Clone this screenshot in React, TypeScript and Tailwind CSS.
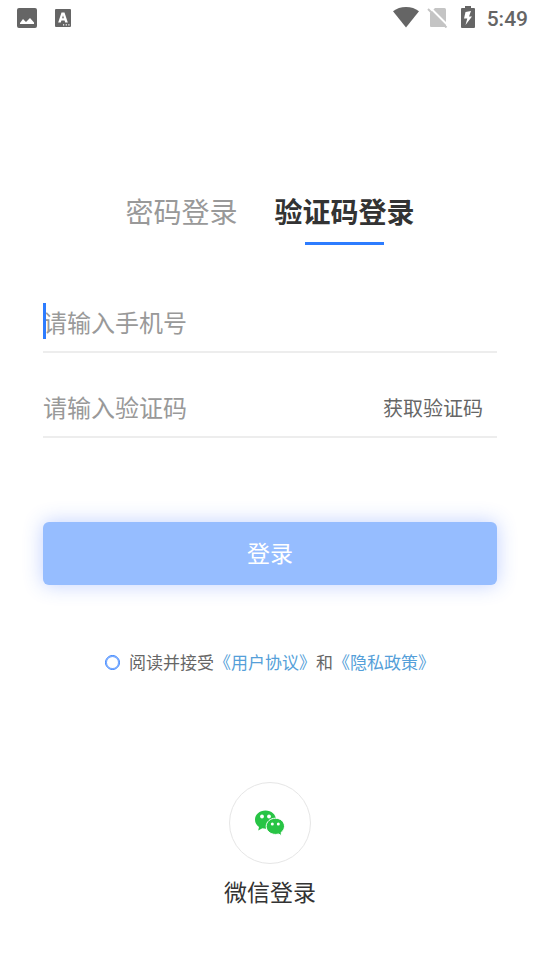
import React, { useState } from "react";

const StatusBar = () => (
  <header className="flex h-9 items-center justify-between pl-[17px] pr-3 text-[#656565]">
    <div className="flex items-center gap-[18px]">
      <svg className="h-5 w-5" viewBox="0 0 20 20" fill="currentColor">
        <path
          fillRule="evenodd"
          d="M2 0h16a2 2 0 0 1 2 2v16a2 2 0 0 1-2 2H2a2 2 0 0 1-2-2V2a2 2 0 0 1 2-2ZM3 16h14v-1.500L13 10l-4 4-3-3-3 4Z"
        />
      </svg>
      <svg className="h-[18px] w-4" viewBox="0 0 16 18" fill="currentColor">
        <path
          fillRule="evenodd"
          d="M1 0h14a1 1 0 0 1 1 1v16a1 1 0 0 1-1 1H1a1 1 0 0 1-1-1V1a1 1 0 0 1 1-1ZM6.500 3.500 3.200 13.500h2.600l.6-2h3.200l.6 2h2.600L9.500 3.500ZM8 6.300l.9 3H7.100ZM8 15.300v1.200h1.200v-1.200ZM10.700 15.300v1.200h1.200v-1.200ZM13.300 15.300v1.200h1.200v-1.200Z"
        />
      </svg>
    </div>
    <div className="flex items-center pb-0.5">
      <svg className="h-[22px] w-[26px]" viewBox="0 0 26 22" fill="currentColor">
        <path d="M13 21.500 0 5.300C3.500 2.500 8 1 13 1s9.500 1.500 13 4.300Z" />
      </svg>
      <svg className="ml-2 h-[22px] w-[22px]" viewBox="0 0 22 22">
        <path d="M8 2h9.500a1.500 1.500 0 0 1 1.500 1.500V20a1 1 0 0 1-1 1H4a1 1 0 0 1-1-1V7Z" fill="#c4c4c4" />
        <path d="m2.500 1 18.500 18.500" stroke="#fff" strokeWidth="2" />
        <path d="m1 3 18.500 18.500" stroke="#c4c4c4" strokeWidth="2" />
      </svg>
      <svg className="ml-3 h-[22px] w-[14px]" viewBox="0 0 14 22" fill="currentColor">
        <path
          fillRule="evenodd"
          d="M4 0h6v2h3a1 1 0 0 1 1 1v18a1 1 0 0 1-1 1H1a1 1 0 0 1-1-1V3a1 1 0 0 1 1-1h3ZM10 5 4.500 6 3 12.500h3.300L4.500 19l6.500-8.500H8Z"
        />
      </svg>
      <span className="ml-3 pt-1 font-['Roboto',sans-serif] text-[21px] font-medium leading-6">
        5:49
      </span>
    </div>
  </header>
);

const WechatIcon = () => (
  <svg className="h-[26px] w-[30px]" viewBox="0 0 30 26">
    <path
      d="M10.500.5C4.500.5 0 4.500 0 9.700c0 3 1.500 5.500 4 7.200L3.200 20.500l4.200-2.200c1 .3 2.200.4 3.300.4 6 0 10.300-4 10.300-9S16.500.5 10.500.5Z"
      fill="#28c445"
    />
    <circle cx="7" cy="6.500" r="1.900" fill="#fff" />
    <circle cx="14" cy="6.500" r="1.900" fill="#fff" />
    <path
      d="M20.500 8.200c-5.200 0-9.300 3.600-9.300 8.100s4.100 8.100 9.300 8.100c1 0 2-.1 2.900-.4l3.400 1.700-.7-3.200c2-1.500 3.400-3.700 3.400-6.200 0-4.500-3.900-8.100-9-8.100Z"
      fill="#28c445"
      stroke="#fff"
      strokeWidth="1"
    />
    <circle cx="17.300" cy="14" r="1.500" fill="#fff" />
    <circle cx="23.300" cy="14" r="1.500" fill="#fff" />
  </svg>
);

const App = () => {
  const [phone, setPhone] = useState("");
  const [code, setCode] = useState("");
  const [accepted, setAccepted] = useState(false);

  return (
    <div className="min-h-screen bg-white font-['Noto_Sans_CJK_SC',sans-serif] text-[#333333]">
      <StatusBar />

      <main className="flex flex-col px-[43px] pt-[155px]">
        <nav className="flex items-start justify-center gap-[37px] text-[28px] leading-10">
          <button type="button" className="text-[#999999]">
            密码登录
          </button>
          <button type="button" className="flex flex-col items-center font-bold">
            验证码登录
            <span className="mt-[11px] h-[3px] w-[79px] bg-[#2d7cff]" />
          </button>
        </nav>

        <form className="flex flex-col" onSubmit={(e) => e.preventDefault()}>
          <div className="relative mt-[58px] border-b-2 border-[#ededed] pb-3">
            <input
              type="tel"
              aria-label="手机号"
              placeholder="请输入手机号"
              value={phone}
              onChange={(e) => setPhone(e.target.value)}
              className="block h-9 w-full text-2xl outline-none placeholder:text-[#999999]"
            />
            {!phone && <span className="absolute left-0 top-0 h-9 w-[3px] bg-[#2d7cff]" />}
          </div>

          <div className="mt-[35px] flex items-center border-b-2 border-[#ededed] pb-3 pr-[14px]">
            <input
              type="text"
              aria-label="验证码"
              placeholder="请输入验证码"
              value={code}
              onChange={(e) => setCode(e.target.value)}
              className="block h-9 min-w-0 flex-1 text-2xl outline-none placeholder:text-[#999999]"
            />
            <button type="button" className="pt-1 text-xl text-[#666666]">
              获取验证码
            </button>
          </div>

          <button
            type="submit"
            className="mt-[84px] h-[63px] rounded-md bg-[#96bdff] pb-0.5 text-[23px] text-white shadow-[0_0_20px_rgba(45,100,255,0.3)]"
          >
            登录
          </button>

          <div className="mt-[65px] flex items-center justify-center text-[17px] leading-6 text-[#666666]">
            <input
              id="accept"
              type="checkbox"
              checked={accepted}
              onChange={(e) => setAccepted(e.target.checked)}
              className="mr-[9px] h-[15px] w-[15px] appearance-none rounded-full border border-[#2d7cff] shadow-[inset_0_0_0_1px_rgba(45,124,255,0.7)] checked:bg-[#2d7cff]"
            />
            <label htmlFor="accept">阅读并接受</label>
            <a href="#agreement" className="text-[#559fd9]">
              《用户协议》
            </a>
            和
            <a href="#privacy" className="text-[#559fd9]">
              《隐私政策》
            </a>
          </div>
        </form>

        <button type="button" className="mt-[108px] flex flex-col items-center self-center">
          <span className="flex h-[82px] w-[82px] items-center justify-center rounded-full border border-[#e6e6e6]">
            <WechatIcon />
          </span>
          <span className="mt-[11px] text-[23px] leading-8">微信登录</span>
        </button>
      </main>
    </div>
  );
};

export default App;
